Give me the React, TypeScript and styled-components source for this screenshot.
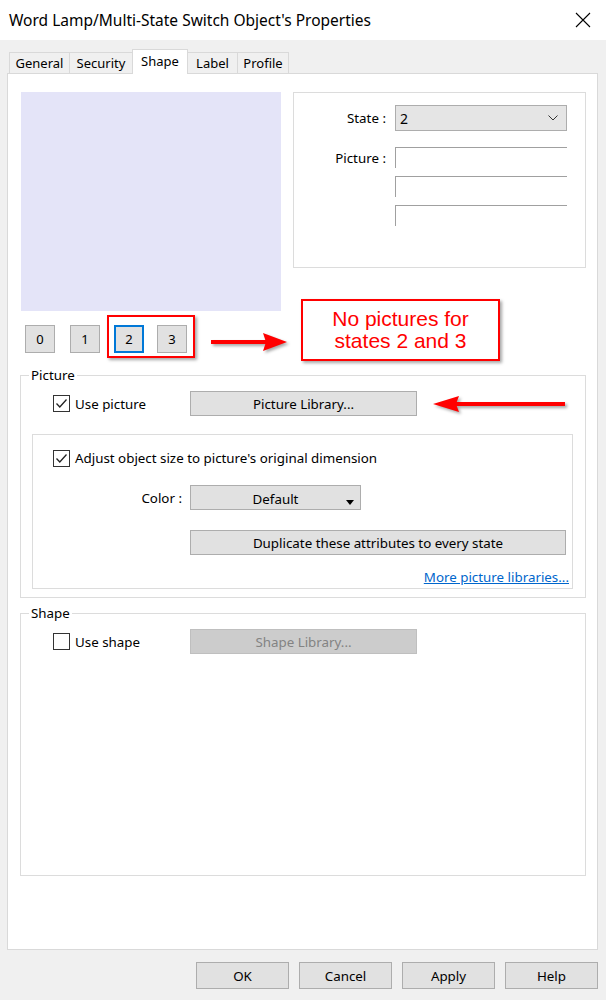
import React from "react";
import styled, { createGlobalStyle } from "styled-components";

const GlobalStyle = createGlobalStyle`
  html, body { margin: 0; padding: 0; background: #f0f0f0; }
  body {
    font-family: "Noto Sans", "Liberation Sans", sans-serif;
    font-size: 13.35px;
    color: #000;
  }
  * { box-sizing: border-box; }
`;

const Window = styled.div`
  width: 606px;
  height: 1000px;
  display: flex;
  flex-direction: column;
  background: #f0f0f0;
  overflow: hidden;
`;

const TitleBar = styled.div`
  height: 40px;
  flex: none;
  background: #fff;
  display: flex;
  align-items: center;
  justify-content: space-between;
  padding: 0 15px 0 9px;
`;

const Title = styled.div`
  font-size: 15.5px;
  color: #000;
  white-space: nowrap;
`;

const CloseIcon = styled.svg`
  width: 16px;
  height: 16px;
  display: block;
`;

const Body = styled.div`
  flex: 1;
  display: flex;
  flex-direction: column;
  padding: 9px 8px 0 7px;
`;

const TabStrip = styled.div`
  display: flex;
  align-items: flex-end;
  height: 24px;
  padding-left: 2px;
`;

const Tab = styled.div<{ $active?: boolean; $width: number }>`
  position: relative;
  z-index: ${(p) => (p.$active ? 1 : 0)};
  width: ${(p) => p.$width}px;
  height: ${(p) => (p.$active ? 25 : 21)}px;
  margin: ${(p) => (p.$active ? "0 0 -1px -1px" : "0 0 0 -1px")};
  padding-bottom: ${(p) => (p.$active ? 3 : 0)}px;
  background: ${(p) => (p.$active ? "#fff" : "#f0f0f0")};
  border: 1px solid #d9d9d9;
  border-bottom: none;
  display: flex;
  align-items: center;
  justify-content: center;
  font-size: 13px;
  white-space: nowrap;
  &:first-child { margin-left: 0; }
`;

const Panel = styled.div`
  height: 877px;
  flex: none;
  background: #fff;
  border: 1px solid #d9d9d9;
  padding: 18px 11px 0 12px;
  display: flex;
  flex-direction: column;
`;

const TopSection = styled.div`
  display: flex;
  justify-content: space-between;
  align-items: flex-start;
`;

const Preview = styled.div`
  width: 260px;
  height: 219px;
  margin-left: 1px;
  background: #e4e4f8;
`;

const StateGroup = styled.div`
  width: 293px;
  height: 176px;
  border: 1px solid #dcdcdc;
  padding: 12px 18px 0 0;
  display: grid;
  grid-template-columns: 92px 172px;
  column-gap: 9px;
  row-gap: 16px;
  align-content: start;
`;

const FieldLabel = styled.div<{ $height: number }>`
  text-align: right;
  height: ${(p) => p.$height}px;
  line-height: ${(p) => p.$height}px;
  white-space: nowrap;
`;

const Select = styled.div`
  height: 26px;
  background: #e5e5e5;
  border: 1px solid #adadad;
  display: flex;
  align-items: center;
  justify-content: space-between;
  padding: 0 8px 0 4px;
  font-size: 14px;
`;

const ChevronIcon = styled.svg`
  width: 10px;
  height: 6px;
  display: block;
`;

const FieldStack = styled.div`
  display: flex;
  flex-direction: column;
  gap: 8px;
`;

const SunkenField = styled.div`
  height: 21px;
  border-top: 1px solid #a0a0a0;
  border-left: 1px solid #a0a0a0;
`;

const StateRow = styled.div`
  display: flex;
  align-items: flex-start;
  margin-top: 4px;
  padding-left: 5px;
`;

const PlainGroup = styled.div`
  display: flex;
  gap: 15px;
  padding-top: 10px;
`;

const Highlight = styled.div`
  display: flex;
  gap: 13px;
  margin-left: 7px;
  padding: 8px 6px 3px 5px;
  border: 2px solid #ff0000;
  box-shadow: 2px 2px 3px rgba(0, 0, 0, 0.35);
`;

const StateButton = styled.div<{ $selected?: boolean }>`
  width: 30px;
  height: 28px;
  background: #e1e1e1;
  border: ${(p) => (p.$selected ? "2px solid #0078d7" : "1px solid #adadad")};
  display: flex;
  align-items: center;
  justify-content: center;
  font-size: 13px;
`;

const ArrowSvg = styled.svg<{ $mt?: number; $ml?: number }>`
  display: block;
  flex: none;
  margin-top: ${(p) => p.$mt ?? 0}px;
  margin-left: ${(p) => p.$ml ?? 0}px;
  filter: drop-shadow(2px 2px 1.5px rgba(0, 0, 0, 0.35));
`;

const Callout = styled.div`
  width: 199px;
  height: 62px;
  margin-left: 12px;
  margin-top: -16px;
  border: 2px solid #ff0000;
  background: #fff;
  box-shadow: 2px 2px 3px rgba(0, 0, 0, 0.35);
  display: flex;
  align-items: center;
  justify-content: center;
  text-align: center;
  color: #ff0000;
  font-family: "Liberation Sans", Arial, sans-serif;
  font-size: 21px;
  line-height: 22px;
`;

const GroupBox = styled.fieldset<{ $mt: number; $height?: number }>`
  margin: ${(p) => p.$mt}px 0 0 0;
  padding: 0 0 8px 0;
  min-width: 0;
  border: 1px solid #dcdcdc;
  ${(p) => (p.$height ? `height: ${p.$height}px;` : "")}
`;

const GroupLegend = styled.legend`
  margin-left: 8px;
  padding: 0 2px;
  font-size: 13.35px;
  line-height: 16px;
`;

const ControlRow = styled.div`
  display: flex;
  align-items: center;
  padding-top: 8px;
  padding-left: 32px;
`;

const CheckLabel = styled.label<{ $width?: number }>`
  display: flex;
  align-items: center;
  gap: 5px;
  white-space: nowrap;
  ${(p) => (p.$width ? `width: ${p.$width}px;` : "")}
`;

const CheckBox = styled.span`
  width: 17px;
  height: 17px;
  flex: none;
  border: 1px solid #333;
  background: #fff;
  display: flex;
  align-items: center;
  justify-content: center;
`;

const PushButton = styled.div<{ $width: number; $height?: number; $disabled?: boolean }>`
  width: ${(p) => p.$width}px;
  height: ${(p) => p.$height ?? 25}px;
  flex: none;
  background: ${(p) => (p.$disabled ? "#cccccc" : "#e1e1e1")};
  border: 1px solid ${(p) => (p.$disabled ? "#bfbfbf" : "#adadad")};
  color: ${(p) => (p.$disabled ? "#838383" : "#000")};
  display: flex;
  align-items: center;
  justify-content: center;
  white-space: nowrap;
`;

const InnerBox = styled.div`
  margin: 18px 12px 0 11px;
  border: 1px solid #dcdcdc;
  padding: 14px 3px 3px 0;
  display: flex;
  flex-direction: column;
`;

const InnerCheckRow = styled.div`
  padding-left: 20px;
`;

const FieldRow = styled.div`
  display: flex;
  align-items: center;
  margin-top: 18px;
`;

const RowLabel = styled.div`
  width: 149px;
  margin-right: 8px;
  text-align: right;
  white-space: nowrap;
`;

const DropButton = styled.div`
  width: 171px;
  height: 25px;
  background: #e1e1e1;
  border: 1px solid #adadad;
  display: flex;
  align-items: center;
  justify-content: center;
  padding-top: 2px;
  position: relative;
`;

const DropTriangle = styled.svg`
  position: absolute;
  right: 6px;
  bottom: 4px;
  width: 8px;
  height: 5px;
`;

const ActionRow = styled.div`
  margin-top: 20px;
  padding-left: 157px;
`;

const LinkRow = styled.div`
  margin-top: 14px;
  display: flex;
  justify-content: flex-end;
  line-height: 16px;
`;

const MoreLink = styled.a`
  color: #0066cc;
  text-decoration: underline;
  cursor: pointer;
`;

const InnerSpacer = styled.div`
  height: 8px;
`;

const Footer = styled.div`
  display: flex;
  justify-content: flex-end;
  gap: 10px;
  margin-top: 12px;
`;

const Check = () => (
  <svg width="13" height="11" viewBox="0 0 13 11">
    <path d="M1.5 5.5 L4.8 9 L11.5 1.5" fill="none" stroke="#222" strokeWidth="1.3" />
  </svg>
);

const CheckItem = ({ checked, label, width }: { checked: boolean; label: string; width?: number }) => (
  <CheckLabel $width={width}>
    <CheckBox>{checked && <Check />}</CheckBox>
    {label}
  </CheckLabel>
);

const tabs: { name: string; width: number }[] = [
  { name: "General", width: 61 },
  { name: "Security", width: 64 },
  { name: "Shape", width: 56 },
  { name: "Label", width: 51 },
  { name: "Profile", width: 52 },
];

export default function App() {
  return (
    <>
      <GlobalStyle />
      <Window>
        <TitleBar>
          <Title>Word Lamp/Multi-State Switch Object's Properties</Title>
          <CloseIcon viewBox="0 0 16 16">
            <path d="M1 1 L15 15 M15 1 L1 15" stroke="#000" strokeWidth="1.1" fill="none" />
          </CloseIcon>
        </TitleBar>
        <Body>
          <TabStrip>
            {tabs.map((t) => (
              <Tab key={t.name} $active={t.name === "Shape"} $width={t.width}>
                {t.name}
              </Tab>
            ))}
          </TabStrip>
          <Panel>
            <TopSection>
              <Preview />
              <StateGroup>
                <FieldLabel $height={26}>State :</FieldLabel>
                <Select>
                  <span>2</span>
                  <ChevronIcon viewBox="0 0 10 6">
                    <path d="M0.5 0.5 L5 5 L9.5 0.5" fill="none" stroke="#333" strokeWidth="1" />
                  </ChevronIcon>
                </Select>
                <FieldLabel $height={22}>Picture :</FieldLabel>
                <FieldStack>
                  <SunkenField />
                  <SunkenField />
                  <SunkenField />
                </FieldStack>
              </StateGroup>
            </TopSection>

            <StateRow>
              <PlainGroup>
                <StateButton>0</StateButton>
                <StateButton>1</StateButton>
              </PlainGroup>
              <Highlight>
                <StateButton $selected>2</StateButton>
                <StateButton>3</StateButton>
              </Highlight>
              <ArrowSvg width="78" height="20" viewBox="0 0 78 20" $mt={17} $ml={16}>
                <rect x="0" y="8" width="56" height="4" fill="#ff0000" />
                <path d="M52 1 L76 10 L52 19 L55 10 Z" fill="#ff0000" />
              </ArrowSvg>
              <Callout>
                No pictures for
                <br />
                states 2 and 3
              </Callout>
            </StateRow>

            <GroupBox $mt={6}>
              <GroupLegend>Picture</GroupLegend>
              <ControlRow>
                <CheckItem checked label="Use picture" width={137} />
                <PushButton $width={227}>Picture Library...</PushButton>
                <ArrowSvg width="134" height="18" viewBox="0 0 134 18" $ml={16}>
                  <path d="M0 9 L26 1 L23 9 L26 17 Z" fill="#ff0000" />
                  <rect x="22" y="7" width="110" height="4" fill="#ff0000" />
                </ArrowSvg>
              </ControlRow>
              <InnerBox>
                <InnerCheckRow>
                  <CheckItem checked label="Adjust object size to picture's original dimension" />
                </InnerCheckRow>
                <FieldRow>
                  <RowLabel>Color :</RowLabel>
                  <DropButton>
                    Default
                    <DropTriangle viewBox="0 0 8 5">
                      <path d="M0 0 L8 0 L4 5 Z" fill="#000" />
                    </DropTriangle>
                  </DropButton>
                </FieldRow>
                <ActionRow>
                  <PushButton $width={376}>Duplicate these attributes to every state</PushButton>
                </ActionRow>
                <LinkRow>
                  <MoreLink>More picture libraries...</MoreLink>
                </LinkRow>
              </InnerBox>
            </GroupBox>

            <GroupBox $mt={7} $height={271}>
              <GroupLegend>Shape</GroupLegend>
              <ControlRow>
                <CheckItem checked={false} label="Use shape" width={137} />
                <PushButton $width={227} $disabled>
                  Shape Library...
                </PushButton>
              </ControlRow>
              <InnerSpacer />
            </GroupBox>
          </Panel>
          <Footer>
            <PushButton $width={93} $height={27}>OK</PushButton>
            <PushButton $width={93} $height={27}>Cancel</PushButton>
            <PushButton $width={93} $height={27}>Apply</PushButton>
            <PushButton $width={93} $height={27}>Help</PushButton>
          </Footer>
        </Body>
      </Window>
    </>
  );
}
